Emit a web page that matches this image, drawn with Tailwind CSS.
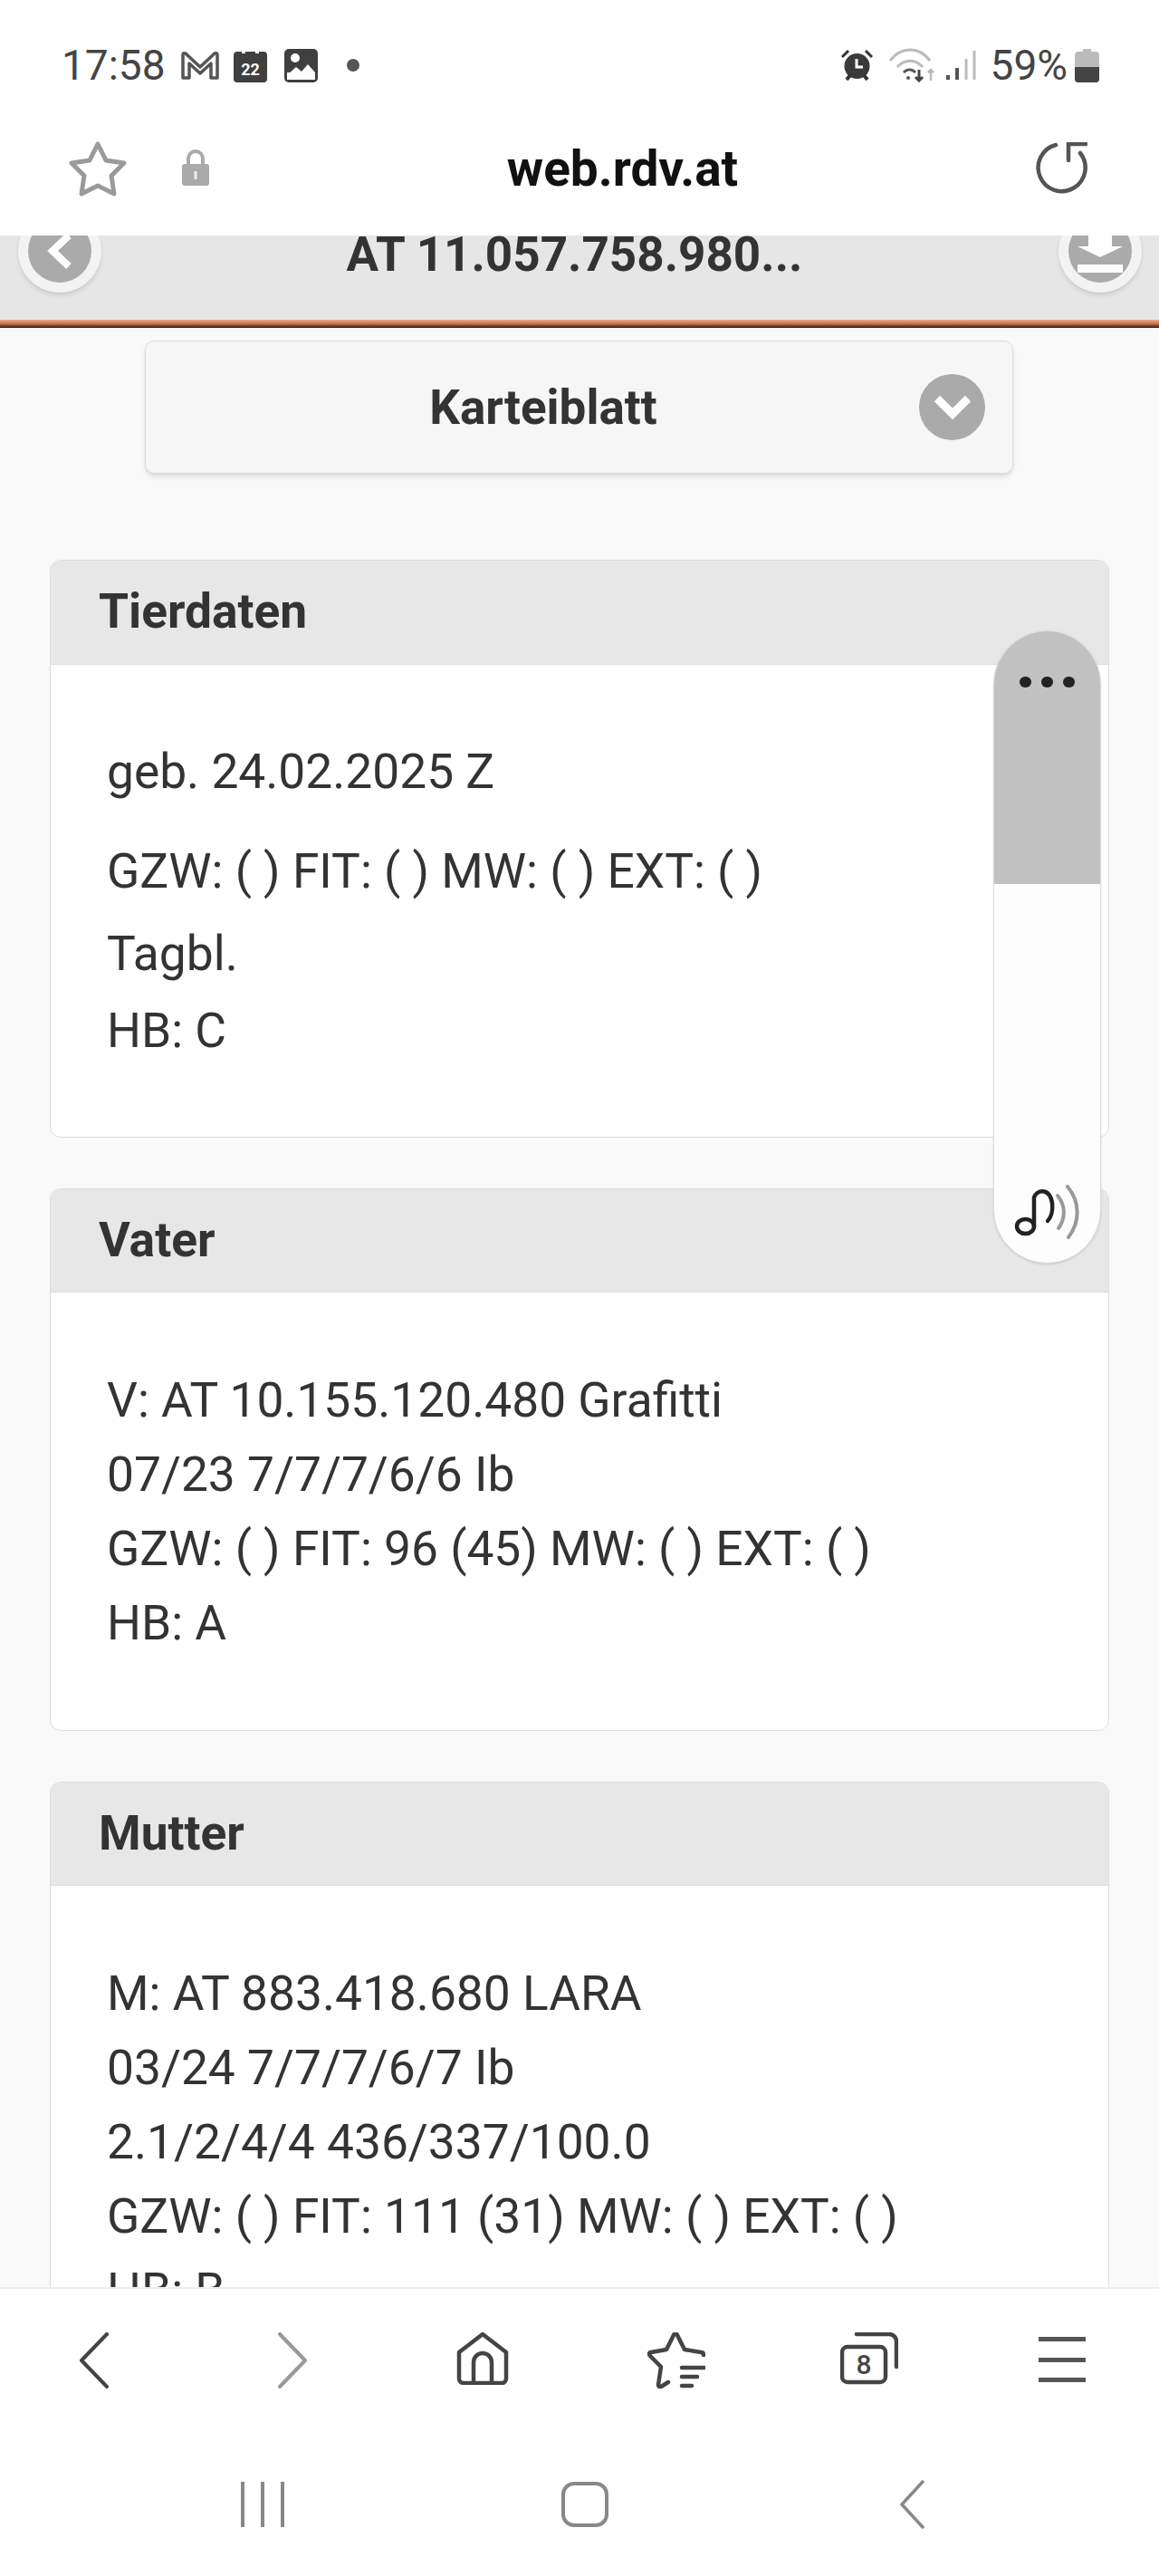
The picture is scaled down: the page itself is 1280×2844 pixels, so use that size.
<!DOCTYPE html>
<html lang="de">
<head>
    <meta charset="UTF-8">
    <meta name="viewport" content="width=device-width, initial-scale=1.0">
    <title>web.rdv.at</title>
    <script src="https://cdn.jsdelivr.net/npm/@tailwindcss/browser@4"></script>
</head>
<body class="w-[1280px] h-[2844px] overflow-hidden flex flex-col bg-white font-['Roboto',sans-serif] text-[#333]">

    <!-- Status bar -->
    <div class="h-[140px] flex items-start justify-between pl-[68px] pr-[66px] pt-[50px] shrink-0">
        <div class="flex items-center h-[44px] text-[#444]">
            <span class="text-[46px] leading-[44px] w-[132px]">17:58</span>
            <svg class="w-[42px] h-[32px] mr-[16px]" viewBox="0 0 42 32" fill="none" stroke="#555" stroke-width="3.500" stroke-linejoin="round"><path d="M2 30V4a2 2 0 0 1 3-1l16 15L37 3a2 2 0 0 1 3 1v26h-7V14L21 25 9 14v16z"/></svg>
            <svg class="w-[37px] h-[37px] mr-[19px]" viewBox="0 0 37 37"><path d="M4 3h5v2h4V3h11v2h4V3h5a4 4 0 0 1 4 4v26a4 4 0 0 1-4 4H4a4 4 0 0 1-4-4V7a4 4 0 0 1 4-4z" fill="#3f3f3f"/><text x="18.500" y="29" text-anchor="middle" font-size="18" font-family="Roboto" font-weight="700" fill="#fff">22</text></svg>
            <svg class="w-[37px] h-[37px] mr-[32px]" viewBox="0 0 37 37"><rect width="37" height="37" rx="5" fill="#3f3f3f"/><rect x="3" y="26" width="31" height="8" fill="#fff"/><path d="M3 29l10-9 6 5 7-8 8 9v8H3z" fill="#fff"/><circle cx="12" cy="10" r="5" fill="#fff"/></svg>
            <span class="w-[14px] h-[14px] rounded-full bg-[#555]"></span>
        </div>
        <div class="flex items-center h-[44px]">
            <svg class="w-[35px] h-[34px] mr-[18px]" viewBox="0 0 35 34"><path d="M1 8l7-7M34 8l-7-7" stroke="#333" stroke-width="3" fill="none"/><circle cx="17.500" cy="18" r="14" fill="#3a3a3a"/><path d="M17 10v9h7" stroke="#fff" stroke-width="3" fill="none"/><path d="M6 33l4-5M29 33l-4-5" stroke="#333" stroke-width="4"/></svg>
            <svg class="w-[52px] h-[38px] mr-[10px]" viewBox="0 0 52 38" fill="none"><path d="M1 14c12-16 32-16 44 0M9 21c8-9 20-9 28 0" stroke="#bbb" stroke-width="3"/><path d="M16 27c4-4 9-4 13 0" stroke="#555" stroke-width="3"/><circle cx="21" cy="33" r="2" fill="#555"/><path d="M33 24v12m-4-4l4 4 4-4" stroke="#444" stroke-width="3"/><path d="M46 36V24m-3 3l3-3 3 3" stroke="#bbb" stroke-width="2.500"/></svg>
            <svg class="w-[34px] h-[34px] mr-[16px]" viewBox="0 0 34 34"><path d="M3 33v-5M13 33V20" stroke="#555" stroke-width="4"/><path d="M23 33V10M32 33V1" stroke="#bbb" stroke-width="3"/></svg>
            <span class="text-[46px] leading-[44px] text-[#444] mr-[8px]">59%</span>
            <svg class="w-[27px] h-[37px]" viewBox="0 0 27 37"><path d="M9 0h9v3h5a4 4 0 0 1 4 4v26a4 4 0 0 1-4 4H4a4 4 0 0 1-4-4V7a4 4 0 0 1 4-4h5z" fill="#bbb"/><path d="M0 20h27v13a4 4 0 0 1-4 4H4a4 4 0 0 1-4-4z" fill="#444"/></svg>
        </div>
    </div>

    <!-- URL bar -->
    <div class="h-[120px] flex items-start shrink-0 pl-[76px] pr-[79px] pt-[15px]">
        <svg class="w-[64px] h-[62px] mr-[61px]" viewBox="0 0 64 62" fill="none" stroke="#9a9a9a" stroke-width="5" stroke-linejoin="round"><path d="M32 4l9 18 20 3-14 14 3 20-18-9-18 9 3-20L3 25l20-3z"/></svg>
        <svg class="w-[30px] h-[40px] mt-[10px]" viewBox="0 0 30 40"><path d="M7 18V10a8 8 0 0 1 16 0v8" stroke="#aaa" stroke-width="4" fill="none"/><rect y="16" width="30" height="24" rx="3" fill="#aaa"/><rect x="13.500" y="24" width="3" height="9" fill="#eee"/></svg>
        <div class="flex-1 text-center font-bold text-[55px] leading-[62px] text-[#111]">web.rdv.at</div>
        <svg class="w-[57px] h-[57px] mt-[2px]" viewBox="0 0 57 57" fill="none" stroke="#555" stroke-width="4.500" stroke-linecap="round"><path d="M22 3A26 26 0 1 0 49 12"/><path d="M36 20V2h19"/></svg>
    </div>

    <!-- Page -->
    <main class="relative flex-1 min-h-0 overflow-hidden bg-[#f9f9f9]">
        <!-- Page header -->
        <div class="h-[93px] bg-[#e6e6e6] flex items-start justify-between pl-[20px] pr-[19px] overflow-hidden">
            <div class="w-[92px] h-[92px] mt-[-29px] rounded-full bg-[#f3f3f3] shadow-md flex items-center justify-center">
                <div class="w-[70px] h-[70px] rounded-full bg-[#aaa] flex items-center justify-center">
                    <svg class="w-[32px] h-[42px]" viewBox="0 0 32 42" fill="none" stroke="#fff" stroke-width="8"><path d="M26 4L8 21l18 17"/></svg>
                </div>
            </div>
            <div class="flex-1 text-center font-bold text-[53px] leading-[40px] text-[#333] mt-[1px] ml-[-12px]">AT 11.057.758.980...</div>
            <div class="w-[92px] h-[92px] mt-[-29px] rounded-full bg-[#f3f3f3] shadow-md flex items-center justify-center">
                <div class="w-[70px] h-[70px] rounded-full bg-[#aaa] flex items-center justify-center">
                    <svg class="w-[50px] h-[50px]" viewBox="0 0 50 50" fill="#fff"><path d="M12 0h26v20h12L25 32 0 20h12z"/><rect y="40" width="50" height="9"/></svg>
                </div>
            </div>
        </div>
        <div class="h-[9px] bg-gradient-to-b from-[#e9b08f] via-[#c9704a] to-[#3a1a10]"></div>

        <!-- Karteiblatt dropdown -->
        <div class="ml-[160px] mr-[161px] mt-[14px] h-[147px] rounded-[10px] bg-[#f6f6f6] border border-[#ddd] shadow-md flex items-center relative">
            <span class="flex-1 text-center font-bold text-[53px] leading-[60px] text-[#333] pl-[24px]">Karteiblatt</span>
            <div class="w-[73px] h-[73px] rounded-full bg-[#aaa] flex items-center justify-center mr-[30px]">
                <svg class="w-[44px] h-[32px]" viewBox="0 0 44 32" fill="none" stroke="#fff" stroke-width="9"><path d="M5 6l17 17L39 6"/></svg>
            </div>
        </div>

        <div class="px-[55px] pt-[95px] flex flex-col gap-[56px]">
            <!-- Tierdaten -->
            <section class="rounded-[12px] border border-[#ddd] bg-white overflow-hidden">
                <h3 class="h-[115px] bg-[#e7e7e7] border-b border-[#ddd] px-[53px] flex items-center font-bold text-[53.300px] text-[#333]">Tierdaten</h3>
                <div class="pl-[62px] pt-[77px] pb-[76px] text-[53.300px] leading-[82px]">
                    <p class="mb-[28px]">geb. 24.02.2025 Z</p>
                    <p class="mb-[9px]">GZW: ( ) FIT: ( ) MW: ( ) EXT: ( )</p>
                    <p class="mb-[3px]">Tagbl.</p>
                    <p>HB: C</p>
                </div>
            </section>
            <!-- Vater -->
            <section class="rounded-[12px] border border-[#ddd] bg-white overflow-hidden">
                <h3 class="h-[114px] bg-[#e7e7e7] border-b border-[#ddd] px-[53px] flex items-center font-bold text-[53.300px] text-[#333]">Vater</h3>
                <div class="pl-[62px] pt-[78px] pb-[77px] text-[53.300px] leading-[82px]">
                    <p>V: AT 10.155.120.480 Grafitti</p>
                    <p>07/23 7/7/7/6/6 Ib</p>
                    <p>GZW: ( ) FIT: 96 (45) MW: ( ) EXT: ( )</p>
                    <p>HB: A</p>
                </div>
            </section>
            <!-- Mutter -->
            <section class="rounded-[12px] border border-[#ddd] bg-white overflow-hidden">
                <h3 class="h-[114px] bg-[#e7e7e7] border-b border-[#ddd] px-[53px] flex items-center font-bold text-[53.300px] text-[#333]">Mutter</h3>
                <div class="pl-[62px] pt-[78px] pb-[79px] text-[53.300px] leading-[82px]">
                    <p>M: AT 883.418.680 LARA</p>
                    <p>03/24 7/7/7/6/7 Ib</p>
                    <p>2.1/2/4/4 436/337/100.0</p>
                    <p>GZW: ( ) FIT: 111 (31) MW: ( ) EXT: ( )</p>
                    <p>HB: B</p>
                </div>
            </section>
        </div>

        <!-- Floating audio handle -->
        <div class="absolute left-[1097px] top-[436px] w-[119px] h-[699px] rounded-full overflow-hidden bg-[#fdfdfd] border border-[#ddd] shadow-sm flex flex-col">
            <div class="h-[279px] bg-[#c1c1c1] flex justify-center gap-[11px] pt-[50px]">
                <span class="w-[13px] h-[12px] rounded-full bg-[#222]"></span>
                <span class="w-[13px] h-[12px] rounded-full bg-[#222]"></span>
                <span class="w-[13px] h-[12px] rounded-full bg-[#222]"></span>
            </div>
            <div class="flex-1 flex items-end justify-center pb-[24px]">
                <svg class="w-[76px] h-[62px]" viewBox="0 0 76 62" fill="none" stroke-linecap="round"><ellipse cx="13.500" cy="46" rx="9.500" ry="8" stroke="#222" stroke-width="4.500"/><path d="M23 46V14C26 5 40 3 43 20c1 8-1 16-5 20" stroke="#222" stroke-width="4.500"/><path d="M49 12c9 11 9 25 1 36" stroke="#999" stroke-width="4"/><path d="M60 2c14 17 14 39 1 56" stroke="#999" stroke-width="4"/></svg>
            </div>
        </div>
    </main>

    <!-- Browser toolbar -->
    <div class="h-[192px] shrink-0 bg-white border-t-2 border-[#eee] grid grid-cols-6 items-start pt-[48px]">
        <svg class="justify-self-center w-[34px] h-[62px] -translate-x-[3px]" viewBox="0 0 34 62" fill="none" stroke="#444" stroke-width="4" stroke-linecap="round" stroke-linejoin="round"><path d="M31 2L3 31l28 29"/></svg>
        <svg class="justify-self-center w-[34px] h-[62px] translate-x-[3px]" viewBox="0 0 34 62" fill="none" stroke="#999" stroke-width="4" stroke-linecap="round" stroke-linejoin="round"><path d="M3 2l28 29L3 60"/></svg>
        <svg class="justify-self-center w-[58px] h-[58px]" viewBox="0 0 58 58" fill="none" stroke="#444" stroke-width="4.500" stroke-linejoin="round"><path d="M29 2L3 22v29a5 5 0 0 0 5 5h42a5 5 0 0 0 5-5V22z"/><path d="M19 56V33a10 10 0 0 1 20 0v23"/></svg>
        <svg class="justify-self-center w-[64px] h-[62px]" viewBox="0 0 64 62" fill="none" stroke="#444" stroke-width="4.500" stroke-linecap="round" stroke-linejoin="round"><path d="M62 25c0-2-1-3-3-3l-18-3-8-16c-1-2-3-2-4 0l-8 16-17 3c-2 0-3 2-1 4l12 12-3 20c0 2 2 3 3 2l8-5"/><path d="M38 39h25M38 49h17M38 59h11"/></svg>
        <svg class="justify-self-center w-[64px] h-[58px]" viewBox="0 0 64 58" fill="none" stroke="#444" stroke-width="4.500" stroke-linecap="round"><rect x="2" y="16" width="48" height="39" rx="6"/><path d="M18 2h36a8 8 0 0 1 8 8v28"/><text x="26" y="46" text-anchor="middle" font-family="Roboto" font-size="30" font-weight="500" fill="#444" stroke="none">8</text></svg>
        <div class="justify-self-center w-[52px] h-[50px] flex flex-col justify-between mt-[5px]">
            <span class="h-[5px] bg-[#555]"></span>
            <span class="h-[5px] bg-[#555]"></span>
            <span class="h-[5px] bg-[#555]"></span>
        </div>
    </div>

    <!-- Android nav bar -->
    <div class="h-[127px] shrink-0 bg-white flex items-start justify-between pt-[23px] pl-[266px] pr-[259px]">
        <div class="w-[48px] h-[50px] flex justify-between">
            <span class="w-[4px] bg-[#888]"></span>
            <span class="w-[4px] bg-[#888]"></span>
            <span class="w-[4px] bg-[#888]"></span>
        </div>
        <div class="w-[52px] h-[50px] rounded-[14px] border-[4px] border-[#888] mr-[16px]"></div>
        <svg class="w-[28px] h-[54px] -mt-[2px]" viewBox="0 0 28 54" fill="none" stroke="#888" stroke-width="3.500" stroke-linecap="round" stroke-linejoin="round"><path d="M26 2L3 27l23 25"/></svg>
    </div>
</body>
</html>
